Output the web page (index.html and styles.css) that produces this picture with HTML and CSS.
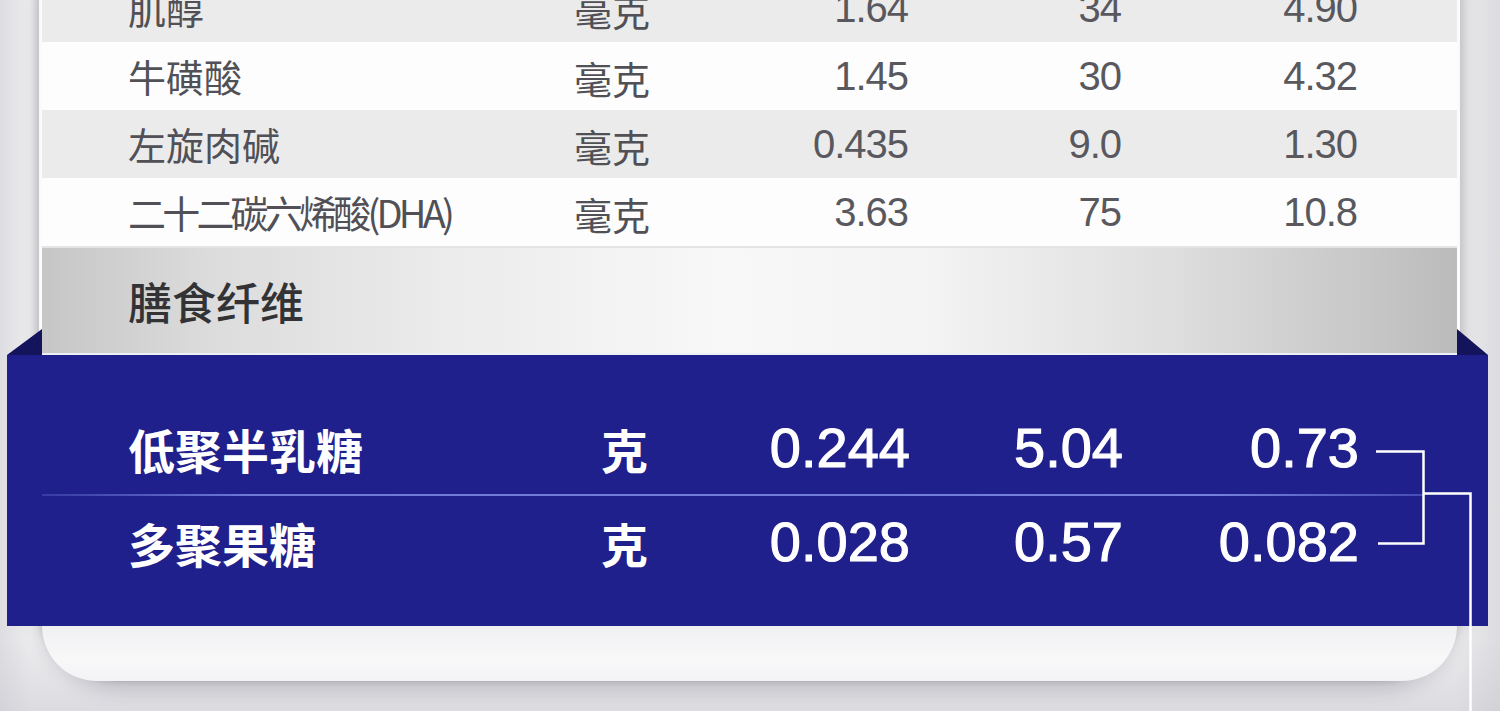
FILE: index.html
```html
<!DOCTYPE html>
<html lang="zh">
<head>
<meta charset="utf-8">
<title>营养成分表</title>
<link rel="stylesheet" href="styles.css">
</head>
<body>
<div class="stage">
  <div class="card">
    <div class="row gray">
      <div class="name">肌醇</div><div class="unit">毫克</div><div class="num">1.64</div><div class="num">34</div><div class="num">4.90</div>
    </div>
    <div class="row white">
      <div class="name">牛磺酸</div><div class="unit">毫克</div><div class="num">1.45</div><div class="num">30</div><div class="num">4.32</div>
    </div>
    <div class="row gray">
      <div class="name">左旋肉碱</div><div class="unit">毫克</div><div class="num">0.435</div><div class="num">9.0</div><div class="num">1.30</div>
    </div>
    <div class="row white">
      <div class="name tight">二十二碳六烯酸(DHA)</div><div class="unit">毫克</div><div class="num">3.63</div><div class="num">75</div><div class="num">10.8</div>
    </div>
    <div class="divider"></div>
    <div class="section-head">膳食纤维</div>
    <div class="blue">
      <div class="brow">
        <div class="name">低聚半乳糖</div><div class="unit">克</div><div class="num">0.244</div><div class="num">5.04</div><div class="num">0.73</div>
      </div>
      <div class="bsep"></div>
      <div class="brow">
        <div class="name">多聚果糖</div><div class="unit">克</div><div class="num">0.028</div><div class="num">0.57</div><div class="num">0.082</div>
      </div>
    </div>
    <div class="card-foot"></div>
  </div>
  <svg class="bracket" width="1500" height="711" viewBox="0 0 1500 711">
    <path d="M1376 451.5 H1423.5 V543.5 H1378" fill="none" stroke="#ffffff" stroke-width="2.5"/>
    <path d="M1423.5 493.5 H1470.5 V711" fill="none" stroke="#ffffff" stroke-width="2.5"/>
  </svg>
</div>
</body>
</html>
```

FILE: styles.css
```css
html, body {
  margin: 0;
  padding: 0;
}
body {
  width: 1500px;
  height: 711px;
  overflow: hidden;
  background: linear-gradient(90deg, #dedee2 0%, #ececee 2%, #ececee 97%, #dcdce0 100%);
  font-family: "Noto Sans CJK SC", "Liberation Sans", sans-serif;
}
.stage {
  position: relative;
  display: flow-root;
  width: 1500px;
  height: 711px;
  background: linear-gradient(180deg, rgba(0,0,0,0) 90%, rgba(190,188,198,0.35) 100%);
}
.card {
  margin-top: -26px;
  margin-left: 39px;
  width: 1415px;
  border-left: 3px solid #fbfbfc;
  border-right: 3px solid #fbfbfc;
  background: #f6f6f7;
  border-radius: 0 0 80px 80px;
  box-shadow: -4px 0 6px rgba(0,0,0,0.10), 4px 0 6px rgba(0,0,0,0.08), 0 10px 18px rgba(80,78,95,0.22);
}
.row {
  display: grid;
  grid-template-columns: 446px 74px 260px 213px 236px;
  padding-left: 86px;
  height: 68px;
  align-items: center;
  color: #505056;
}
.row.gray { background: #ebebeb; }
.row.white { background: #fdfdfd; }
.row .name {
  font-size: 38px;
  line-height: 1;
  white-space: nowrap;
}
.row .name.tight {
  letter-spacing: -3.8px;
}
.row .unit {
  font-size: 38px;
  line-height: 1;
  text-align: right;
  white-space: nowrap;
  padding-top: 4px;
}
.row .num {
  font-family: "Liberation Sans", sans-serif;
  font-size: 40px;
  line-height: 1;
  text-align: right;
  letter-spacing: -1px;
  color: #58585e;
}
.divider {
  height: 2px;
  background: #e4e4e6;
}
.section-head {
  height: 105px;
  padding-left: 86px;
  display: flex;
  align-items: center;
  font-size: 44px;
  font-weight: 500;
  color: #333336;
  background: linear-gradient(90deg, #c6c6c6 0%, #dcdcdc 12%, #ebebeb 28%, #f8f8f8 48%, #f4f4f4 62%, #dedede 80%, #c8c8c8 93%, #bbbbbb 100%);
  border-bottom: 2px solid #eef0f8;
}
.blue {
  position: relative;
  margin-left: -35px;
  margin-right: -31px;
  background: #1f208b;
  padding-top: 47px;
  padding-bottom: 38px;
  color: #ffffff;
}
.blue::before,
.blue::after {
  content: "";
  position: absolute;
  top: -26px;
  height: 26px;
  background: #13145c;
}
.blue::before {
  left: 0;
  width: 35px;
  clip-path: polygon(0 100%, 100% 0, 100% 100%);
}
.blue::after {
  right: 0;
  width: 31px;
  clip-path: polygon(0 0, 100% 100%, 0 100%);
}
.brow {
  display: grid;
  grid-template-columns: 446px 74px 262px 213px 236px;
  padding-left: 121px;
  height: 92px;
  align-items: center;
}
.brow .name,
.brow .unit {
  font-size: 47px;
  font-weight: 700;
  line-height: 1;
  white-space: nowrap;
}
.brow .unit {
  text-align: right;
}
.brow .num {
  font-family: "Liberation Sans", sans-serif;
  font-size: 56px;
  line-height: 1;
  text-align: right;
  -webkit-text-stroke: 1.1px #ffffff;
}
.bsep {
  height: 2px;
  margin-left: 35px;
  margin-right: 64px;
  background: linear-gradient(90deg, rgba(110,120,220,0.3) 0%, #6f79d8 15%, #7480dc 85%, rgba(110,120,220,0.5) 100%);
}
.card-foot {
  height: 55px;
  border-radius: 0 0 80px 80px;
  background: linear-gradient(180deg, #f0f0f2 0%, #f8f8f9 60%, #f3f3f5 100%);
}
.bracket {
  position: absolute;
  left: 0;
  top: 0;
  pointer-events: none;
}
```
